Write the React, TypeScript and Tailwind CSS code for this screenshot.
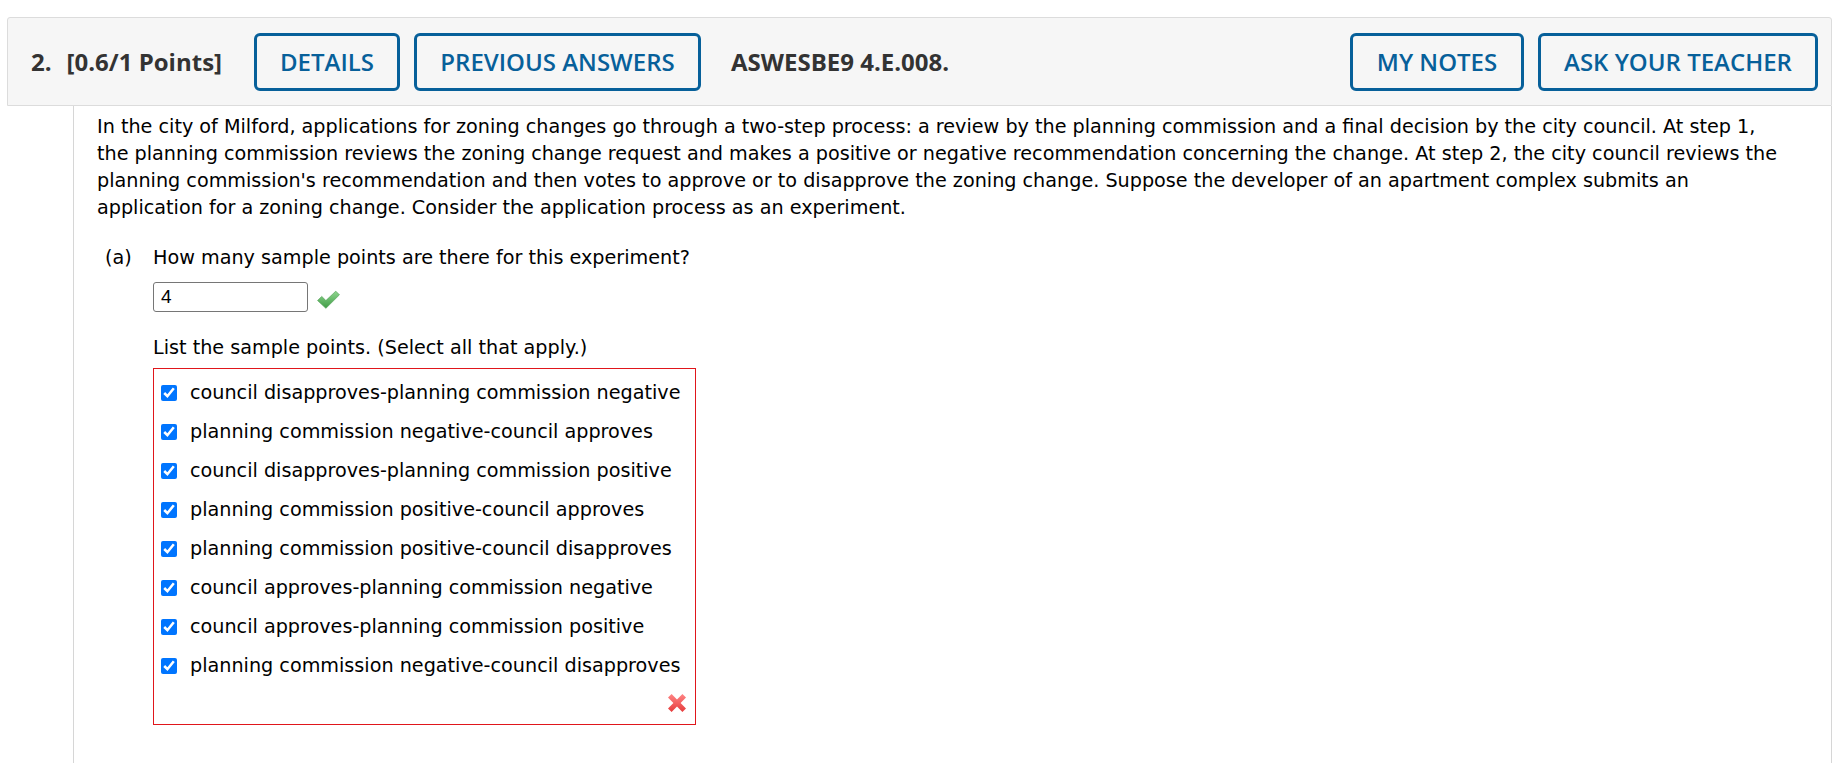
import React from 'react';

const samplePoints = [
  'council disapproves-planning commission negative',
  'planning commission negative-council approves',
  'council disapproves-planning commission positive',
  'planning commission positive-council approves',
  'planning commission positive-council disapproves',
  'council approves-planning commission negative',
  'council approves-planning commission positive',
  'planning commission negative-council disapproves',
];

const HeaderButton: React.FC<{ w: string; children: React.ReactNode }> = ({ w, children }) => (
  <button
    className={`${w} h-[58px] flex items-center justify-center rounded-[6px] border-[3px] border-[#07609a] text-[#07609a] font-semibold bg-transparent`}
  >
    {children}
  </button>
);

const GreenCheck: React.FC = () => (
  <svg width="25" height="21" viewBox="0 0 24 20" className="ml-[8px] mt-[4px]">
    <defs>
      <linearGradient id="gc" x1="0" y1="0" x2="0" y2="1">
        <stop offset="0" stopColor="#8fd68f" />
        <stop offset="1" stopColor="#3f9c45" />
      </linearGradient>
    </defs>
    <path d="M1.5 11 L5.5 7 L9.5 11 L19 2 L22.5 5.5 L9.5 18.5 Z" fill="url(#gc)" stroke="#4a9a4f" strokeWidth="0.6" />
  </svg>
);

const RedX: React.FC = () => (
  <svg width="24" height="24" viewBox="0 0 20 20">
    <defs>
      <linearGradient id="rx" x1="0" y1="0" x2="0" y2="1">
        <stop offset="0" stopColor="#ff8585" />
        <stop offset="1" stopColor="#e63b3b" />
      </linearGradient>
    </defs>
    <polygon
      points="2.5,5.5 5.5,2.5 10,7 14.5,2.5 17.5,5.5 13,10 17.5,14.5 14.5,17.5 10,13 5.5,17.5 2.5,14.5 7,10"
      fill="url(#rx)"
    />
  </svg>
);

export default function App() {
  return (
    <div className="min-h-screen bg-white flex flex-col pt-[17px] pl-[7px] pr-[3px] text-black font-['DejaVu_Sans',Verdana,sans-serif]">
      {/* question header */}
      <div className="h-[89px] shrink-0 flex items-center border border-[#dcdcdc] rounded-t-[3px] bg-[#f6f6f6] pl-[23px] pr-[13px] font-['Open_Sans',sans-serif] text-[24px]">
        <span className="font-bold text-[#333] mr-[15px]">2.</span>
        <span className="font-bold text-[#333]">[0.6/1 Points]</span>
        <div className="flex gap-[14px] ml-[32px]">
          <HeaderButton w="w-[146px]">DETAILS</HeaderButton>
          <HeaderButton w="w-[287px]">PREVIOUS ANSWERS</HeaderButton>
        </div>
        <span className="ml-[30px] font-bold text-[#333]">ASWESBE9 4.E.008.</span>
        <div className="ml-auto flex gap-[14px]">
          <HeaderButton w="w-[174px]">MY NOTES</HeaderButton>
          <HeaderButton w="w-[280px]">ASK YOUR TEACHER</HeaderButton>
        </div>
      </div>

      {/* question body */}
      <div className="flex-1 ml-[66px] border-x border-[#d6d6d6] pl-[23px] pt-[7px] text-[19.2px] leading-[27px]">
        <p className="max-w-[1688px]">
          In the city of Milford, applications for zoning changes go through a two-step process: a review by the
          planning commission and a final decision by the city council. At step 1, the planning commission reviews the
          zoning change request and makes a positive or negative recommendation concerning the change. At step 2, the
          city council reviews the planning commission's recommendation and then votes to approve or to disapprove the
          zoning change. Suppose the developer of an apartment complex submits an application for a zoning change.
          Consider the application process as an experiment.
        </p>

        <div className="flex mt-[23px] ml-[8px]">
          <span className="w-[48px] shrink-0">(a)</span>
          <div>
            <p>How many sample points are there for this experiment?</p>
            <div className="flex items-center mt-[11px]">
              <input
                readOnly
                value="4"
                className="w-[155px] h-[30px] border border-[#767676] rounded-[3px] px-[7px] font-['Liberation_Sans',Arial,sans-serif] text-[19px] text-black outline-none"
              />
              <GreenCheck />
            </div>

            <p className="mt-[22px]">List the sample points. (Select all that apply.)</p>

            <div className="mt-[7px] w-[543px] border border-[#e0161b] pt-[4px] pb-[9px] px-[6px]">
              {samplePoints.map((label) => (
                <label key={label} className="h-[39px] flex items-center gap-[13px] pl-[1px]">
                  <input type="checkbox" defaultChecked className="w-[16px] h-[16px] m-0 accent-[#0075ff]" />
                  <span>{label}</span>
                </label>
              ))}
              <div className="flex justify-end mt-[6px]">
                <RedX />
              </div>
            </div>
          </div>
        </div>
      </div>
    </div>
  );
}
